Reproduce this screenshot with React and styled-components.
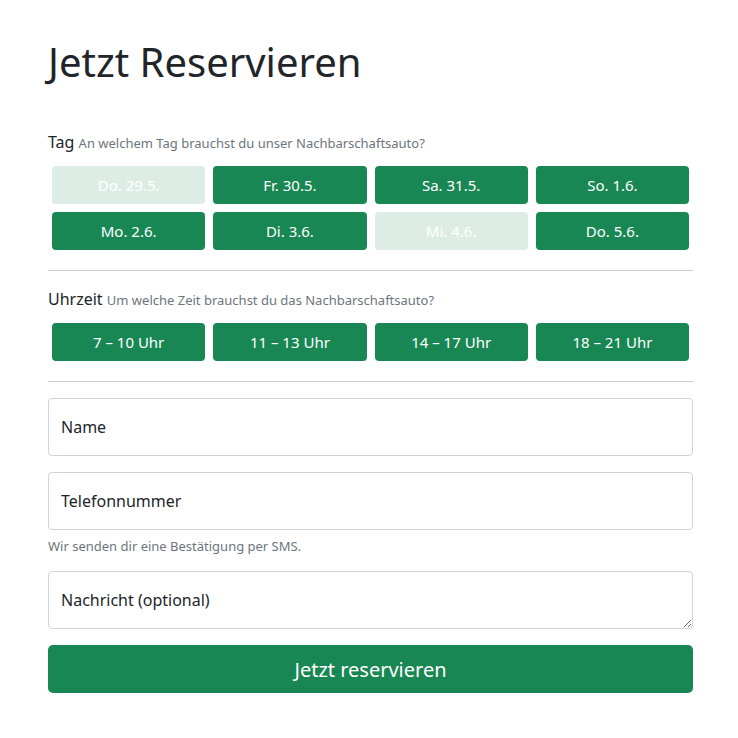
import React from 'react';
import styled, { createGlobalStyle } from 'styled-components';

const GlobalStyle = createGlobalStyle`
  body {
    margin: 0;
    background: #fff;
    font-family: "Noto Sans", "Open Sans", sans-serif;
    color: #212529;
  }
  * { box-sizing: border-box; }
`;

const days = [
  { label: 'Do. 29.5.', disabled: true },
  { label: 'Fr. 30.5.' },
  { label: 'Sa. 31.5.' },
  { label: 'So. 1.6.' },
  { label: 'Mo. 2.6.' },
  { label: 'Di. 3.6.' },
  { label: 'Mi. 4.6.', disabled: true },
  { label: 'Do. 5.6.' },
];

const times = ['7 – 10 Uhr', '11 – 13 Uhr', '14 – 17 Uhr', '18 – 21 Uhr'];

const App = () => {
  return (
    <>
      <GlobalStyle />
      <Page>
        <Title>Jetzt Reservieren</Title>

        <Section>
          <Label>
            Tag <small>An welchem Tag brauchst du unser Nachbarschaftsauto?</small>
          </Label>
          <ChoiceGrid>
            {days.map((d) => (
              <Choice key={d.label} $disabled={d.disabled}>
                {d.label}
              </Choice>
            ))}
          </ChoiceGrid>
        </Section>

        <Divider />

        <Section>
          <Label>
            Uhrzeit <small>Um welche Zeit brauchst du das Nachbarschaftsauto?</small>
          </Label>
          <ChoiceGrid>
            {times.map((t) => (
              <Choice key={t}>{t}</Choice>
            ))}
          </ChoiceGrid>
        </Section>

        <Divider />

        <Field>
          <Input placeholder="Name" />
        </Field>
        <Field>
          <Input placeholder="Telefonnummer" />
          <Help>Wir senden dir eine Bestätigung per SMS.</Help>
        </Field>
        <Field>
          <TextArea placeholder="Nachricht (optional)" />
        </Field>
        <Submit>Jetzt reservieren</Submit>
      </Page>
    </>
  );
};

const Page = styled.div`
  width: 645px;
  margin: 0 0 0 48px;
  padding: 38px 0 40px;
`;

const Title = styled.h1`
  margin: 0 0 44px;
  font-size: 40px;
  font-weight: 400;
  line-height: 1.2;
  color: #212529;
`;

const Section = styled.div`
  display: flex;
  flex-direction: column;
`;

const Label = styled.div`
  font-size: 16px;
  line-height: 24px;
  margin-bottom: 11px;

  & > small {
    font-size: 13px;
    color: #6c757d;
  }
`;

const ChoiceGrid = styled.div`
  display: grid;
  grid-template-columns: repeat(4, 1fr);
  gap: 8px;
  padding: 0 4px;
`;

const Choice = styled.button`
  height: 38px;
  border: none;
  border-radius: 4px;
  font-family: inherit;
  font-size: 15px;
  color: #fff;
  background: ${(p) => (p.$disabled ? '#ddece5' : '#198754')};
  cursor: ${(p) => (p.$disabled ? 'default' : 'pointer')};
`;

const Divider = styled.hr`
  margin: 20px 0 16px;
  border: none;
  border-top: 1px solid #ccc;
`;

const Field = styled.div`
  margin-bottom: 16px;
`;

const Input = styled.input`
  display: block;
  width: 100%;
  height: 58px;
  padding: 0 12px;
  border: 1px solid #ced4da;
  border-radius: 4px;
  font-family: inherit;
  font-size: 16px;
  color: #212529;

  &::placeholder {
    color: #212529;
  }
`;

const TextArea = styled.textarea`
  display: block;
  width: 100%;
  height: 58px;
  padding: 16px 12px;
  border: 1px solid #ced4da;
  border-radius: 4px;
  font-family: inherit;
  font-size: 16px;
  line-height: 24px;
  color: #212529;

  &::placeholder {
    color: #212529;
  }
`;

const Help = styled.div`
  margin-top: 7px;
  font-size: 13px;
  color: #6c757d;
`;

const Submit = styled.button`
  display: block;
  width: 100%;
  height: 48px;
  border: none;
  border-radius: 5px;
  background: #198754;
  color: #fff;
  font-family: inherit;
  font-size: 20px;
  cursor: pointer;
`;

export default App;
